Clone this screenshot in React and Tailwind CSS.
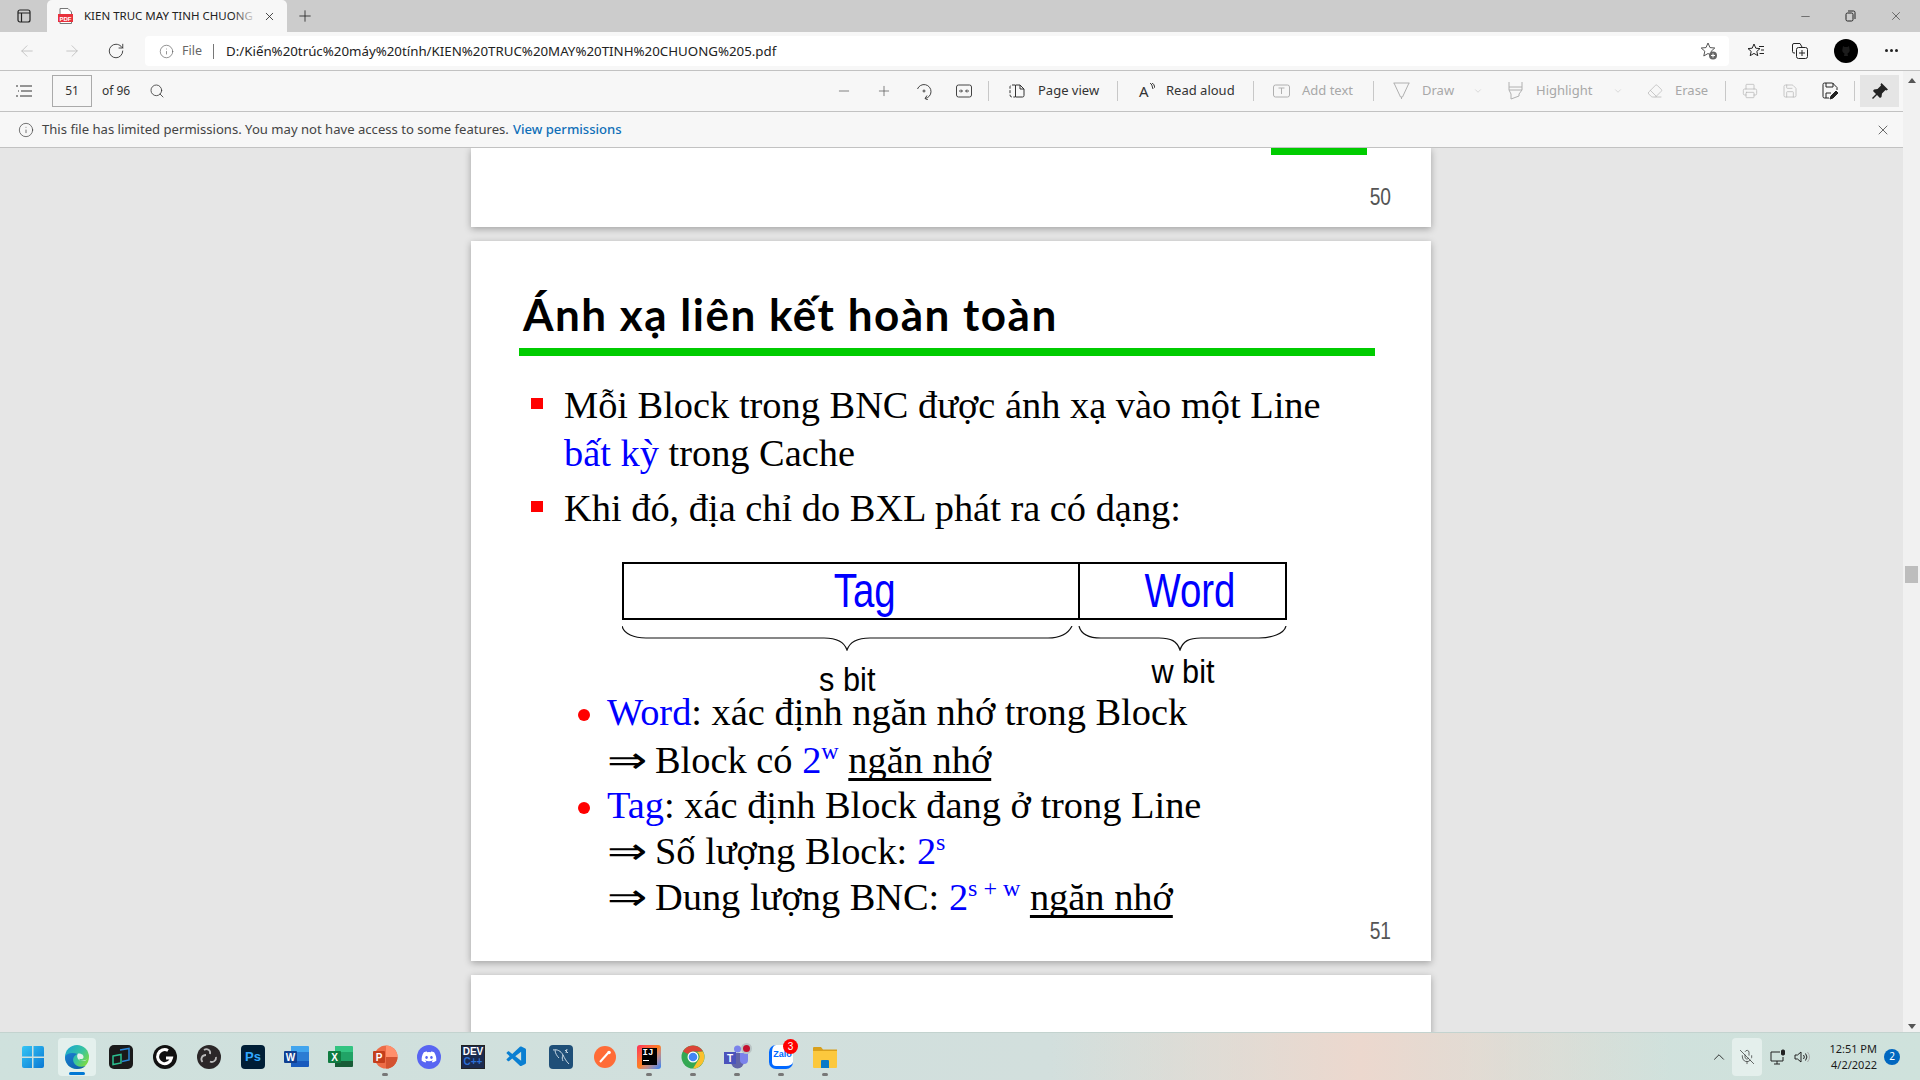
import { ArrowLeft, ArrowRight, ChevronDown, ChevronUp, Eraser, Info, MicOff, Minus, Plus, Printer, RotateCw, Save, Search, X } from 'lucide-react';
import { FaDiscord } from 'react-icons/fa';
import { VscVscode } from 'react-icons/vsc';

const Sep = ({ className }) => <div className={`w-px h-[20px] bg-[#c8c8c8] shrink-0 ${className}`} />;

const TabStrip = () => (
  <div className="h-[32px] bg-[#cccccc] flex items-end shrink-0">
    <svg className="ml-[17px] mb-[9px]" width="14" height="14" viewBox="0 0 14 14" fill="none" stroke="#222" strokeWidth="1.2">
      <rect x="1" y="1" width="12" height="12" rx="2" />
      <path d="M1 4h12M4.5 4v9" />
    </svg>
    <div className="relative ml-[16px] w-[240px] h-[32px] bg-[#f7f7f7] rounded-t-[5px] flex items-center">
      <svg className="ml-[11px]" width="15" height="16" viewBox="0 0 15 16">
        <path d="M2 .5h8l3.5 3.5v11.5H2z" fill="#fff" stroke="#777" />
        <rect x="0" y="6" width="15" height="8" fill="#e8323c" />
        <text x="7.5" y="12.5" fontSize="6" fontWeight="700" fill="#fff" textAnchor="middle" className="font-['Liberation_Sans',sans-serif]">PDF</text>
      </svg>
      <span className="ml-[11px] w-[172px] whitespace-nowrap text-[11.5px] text-[#222]">KIEN TRUC MAY TINH CHUONG</span>
      <div className="absolute left-[186px] top-0 w-[24px] h-[32px] bg-gradient-to-r from-transparent to-[#f7f7f7]" />
      <X className="ml-[7px]" size={13} strokeWidth={1.5} color="#222" />
    </div>
    <Plus className="ml-[9px] mb-[7px]" size={18} strokeWidth={1.1} color="#222" />
    <div className="ml-auto flex items-center h-[32px]">
      <Minus size={13} strokeWidth={1} color="#222" />
      <svg className="ml-[33px]" width="11" height="12" viewBox="0 0 11 12" fill="none" stroke="#222">
        <rect x="1" y="3" width="7" height="8" rx="1.5" />
        <path d="M3 1h5.5a1.5 1.5 0 0 1 1.5 1.5V9" />
      </svg>
      <X className="ml-[33px] mr-[17px]" size={14} strokeWidth={1} color="#222" />
    </div>
  </div>
);

const AddressBar = () => (
  <div className="h-[39px] bg-[#f7f7f7] border-b border-[#c2c2c2] flex items-start pt-[4px] shrink-0">
    <ArrowLeft className="ml-[18px] mt-[6px]" size={18} strokeWidth={1} color="#b5b5b5" />
    <ArrowRight className="ml-[27px] mt-[6px]" size={18} strokeWidth={1} color="#b5b5b5" />
    <RotateCw className="ml-[26px] mt-[6px]" size={18} strokeWidth={1.2} color="#333" />
    <div className="ml-[20px] w-[1584px] h-[30px] bg-white rounded-[4px] flex items-center">
      <Info className="ml-[14px]" size={15} strokeWidth={1} color="#555" />
      <span className="ml-[8px] text-[12.5px] text-[#666]">File</span>
      <div className="ml-[11px] w-px h-[15px] bg-[#777]" />
      <span className="ml-[12px] pt-[1px] text-[13.3px] text-[#222] w-[600px] whitespace-nowrap">D:/Kiến%20trúc%20máy%20tính/KIEN%20TRUC%20MAY%20TINH%20CHUONG%205.pdf</span>
      <svg className="ml-auto mr-[11px]" width="18" height="20" viewBox="0 0 18 20" fill="none">
        <path d="M8 2l2 4.6 4.8.4-3.6 3.2 1 4.8L8 12.5 3.8 15l1-4.8L1.2 7l4.8-.4z" stroke="#555" />
        <circle cx="13" cy="14.5" r="4" fill="#666" />
        <path d="M13 12.5v4M11 14.5h4" stroke="#fff" />
      </svg>
    </div>
    <svg className="ml-[18px] mt-[5px]" width="18" height="20" viewBox="0 0 18 20" fill="none" stroke="#222">
      <path d="M7 3l1.8 4.2 4.2.4-3.2 2.8 1 4.3L7 12.4 3.2 14.7l1-4.3L1 7.6l4.2-.4z" />
      <path d="M12 5.5h5M14 9h3M12.5 12.5H17" />
    </svg>
    <svg className="ml-[26px] mt-[5px]" width="18" height="20" viewBox="0 0 18 20" fill="none" stroke="#222">
      <path d="M4 12H3a1.5 1.5 0 0 1-1.5-1.5V4A1.5 1.5 0 0 1 3 2.5h6L11 6" />
      <rect x="5.5" y="6.5" width="11" height="11" rx="2" />
      <path d="M11 9v6M8 12h6" />
    </svg>
    <div className="ml-[25px] mt-[3px] w-[24px] h-[24px] rounded-full bg-black flex items-center justify-center">
      <svg width="12" height="12" viewBox="0 0 12 12" fill="#1c1c1c"><path d="M3 1l1.5 1h3L9 1l.5 3c.8 2-.5 4-2 4.5L8 11H4l.5-2.5c-1.5-.5-2.8-2.5-2-4.5z" /></svg>
    </div>
    <div className="ml-[27px] mt-[13px] flex gap-[2px]">
      <div className="w-[3px] h-[3px] rounded-full bg-[#222]" />
      <div className="w-[3px] h-[3px] rounded-full bg-[#222]" />
      <div className="w-[3px] h-[3px] rounded-full bg-[#222]" />
    </div>
  </div>
);

const PdfToolbar = () => (
  <div className="h-[41px] bg-[#f7f7f7] border-b border-[#c2c2c2] flex items-center text-[13px] text-[#333] shrink-0">
    <svg className="ml-[16px]" width="16" height="12" viewBox="0 0 16 12" fill="none" stroke="#333">
      <path d="M0 1h2M4 1h12M2 6h1M5 6h11M0 11h2M4 11h12" />
    </svg>
    <div className="ml-[20px] w-[40px] h-[32px] border border-[#aaaaaa] flex items-center justify-center text-[12px]">51</div>
    <span className="ml-[10px] w-[27px] whitespace-nowrap text-[12px]">of 96</span>
    <Search className="ml-[20px]" size={16} strokeWidth={1.2} color="#333" />

    <Minus className="ml-[671px]" size={16} strokeWidth={1.1} color="#555" />
    <Plus className="ml-[24px]" size={16} strokeWidth={1.1} color="#555" />
    <svg className="ml-[24px]" width="16" height="17" viewBox="0 0 16 17" fill="none" stroke="#444">
      <path d="M1.5 6A7 7 0 1 1 9 15.5" />
      <path d="M11 12.5l-2 3 3 1.5" />
      <circle cx="8" cy="8" r="1" />
    </svg>
    <svg className="ml-[24px]" width="16" height="14" viewBox="0 0 16 14" fill="none" stroke="#444">
      <rect x=".5" y="1" width="15" height="12" rx="2" />
      <path d="M3 7h3M10 7h3" />
      <path d="M5 5.5L6.5 7 5 8.5M11 5.5L9.5 7l1.5 1.5" />
    </svg>
    <Sep className="ml-[16px]" />
    <svg className="ml-[20px]" width="16" height="14" viewBox="0 0 16 14" fill="none" stroke="#333">
      <path d="M6 1H3a2 2 0 0 0-2 2v8a2 2 0 0 0 2 2h3" strokeDasharray="3 1.5" />
      <path d="M6.5 1v12h7a1.5 1.5 0 0 0 1.5-1.5V5l-4-4zM11 1v4h4" />
    </svg>
    <span className="ml-[13px] w-[61px] whitespace-nowrap">Page view</span>
    <Sep className="ml-[18px]" />
    <span className="ml-[21px] w-[11px] text-[15px] leading-none">A</span>
    <svg className="mb-[8px]" width="5" height="8" viewBox="0 0 5 8" fill="none" stroke="#333"><path d="M0 0c2 1 2 3 3 6M2 0c2 1 2 2 3 5" /></svg>
    <span className="ml-[11px] w-[69px] whitespace-nowrap">Read aloud</span>
    <Sep className="ml-[18px]" />
    <svg className="ml-[19px]" width="17" height="14" viewBox="0 0 17 14" fill="none" stroke="#b0b0b0">
      <rect x=".5" y="1" width="16" height="12" rx="2" />
      <path d="M5.5 4h6M8.5 4v6" />
    </svg>
    <span className="ml-[12px] w-[52px] whitespace-nowrap text-[#a8a8a8]">Add text</span>
    <Sep className="ml-[19px]" />
    <svg className="ml-[19px]" width="17" height="18" viewBox="0 0 17 18" fill="none" stroke="#b0b0b0">
      <path d="M.5 1h16M1 1l6.5 14h2L16 1M8.5 15v2" />
    </svg>
    <span className="ml-[12px] w-[31px] whitespace-nowrap text-[#a8a8a8]">Draw</span>
    <ChevronDown className="ml-[20px]" size={10} strokeWidth={1} color="#b0b0b0" />
    <svg className="ml-[25px]" width="15" height="18" viewBox="0 0 15 18" fill="none" stroke="#b0b0b0">
      <path d="M1 0v8h13V0M1 5h13M1 8l2 4v5l8-3v-2l3-4" />
    </svg>
    <span className="ml-[13px] w-[57px] whitespace-nowrap text-[#a8a8a8]">Highlight</span>
    <ChevronDown className="ml-[20px]" size={10} strokeWidth={1} color="#b0b0b0" />
    <Eraser className="ml-[24px]" size={16} strokeWidth={1} color="#b0b0b0" />
    <span className="ml-[12px] w-[32px] whitespace-nowrap text-[#a8a8a8]">Erase</span>
    <Sep className="ml-[18px]" />
    <Printer className="ml-[16px]" size={16} strokeWidth={1} color="#b0b0b0" />
    <Save className="ml-[24px]" size={16} strokeWidth={1} color="#b0b0b0" />
    <svg className="ml-[24px]" width="16" height="18" viewBox="0 0 16 18" fill="none" stroke="#222">
      <path d="M7 16H2.5A1.5 1.5 0 0 1 1 14.5v-12A1.5 1.5 0 0 1 2.5 1h8L15 5.5V8" />
      <path d="M4 1v4h7V1M4 16v-5h5" />
      <path d="M8 17l1-3 5-5 2 2-5 5z" fill="#222" />
    </svg>
    <Sep className="ml-[16px]" />
    <div className="ml-[5px] w-[39px] h-[32px] bg-[#e5e5e5] flex items-center justify-center">
      <svg width="16" height="16" viewBox="0 0 16 16" fill="#222">
        <path d="M9.5 0L16 6.5l-1.5 1-1-.5L10 10.5l-.5 3.5-1.5 1-3-3L1 16l-1-1 4-4-3-3 1-1.5L5.5 6 9 2.5l-.5-1z" />
      </svg>
    </div>
  </div>
);

const PermissionBar = () => (
  <div className="h-[36px] bg-[#f7f7f7] border-b border-[#c2c2c2] flex items-center text-[13.1px] text-[#444] shrink-0">
    <Info className="ml-[18px]" size={16} strokeWidth={1} color="#333" />
    <span className="ml-[8px] pt-[1px] whitespace-nowrap">This file has limited permissions. You may not have access to some features.</span>
    <span className="ml-[4px] pt-[1px] whitespace-nowrap font-medium text-[#0f6fb8]">View permissions</span>
    <X className="ml-auto mr-[12px]" size={16} strokeWidth={1} color="#222" />
  </div>
);

const Arrow = () => (
  <span className="inline-block w-[48px] leading-none font-['DejaVu_Sans',sans-serif] text-[37px]">
    <span className="inline-block origin-left scale-x-[1.3]">⇒</span>
  </span>
);

const Sup = ({ children }) => <span className="text-[24px] leading-[0] align-[14px] text-[#0000ff]">{children}</span>;

const Square = ({ className }) => <div className={`w-[12px] h-[11px] bg-[#ff0000] shrink-0 ${className}`} />;

const Dot = () => <div className="mt-[20px] w-[12px] h-[12px] rounded-full bg-[#ff0000] shrink-0" />;

const Slide = () => (
  <div className="h-[720px] bg-white shadow-[0_2px_7px_rgba(0,0,0,0.3)] shrink-0 flex flex-col font-['Liberation_Serif',serif] text-black overflow-hidden">
    <h1 className="ml-[52px] mt-[47px] h-[52px] shrink-0 leading-[52px] text-[44px] tracking-[1.5px] font-bold font-['Lato',sans-serif] whitespace-nowrap">Ánh xạ liên kết hoàn toàn</h1>
    <div className="ml-[48px] mt-[8px] w-[856px] h-[8px] shrink-0 bg-[#00cc00]" />
    <div className="ml-[60px] mt-[25px] flex shrink-0">
      <Square className="mt-[17px]" />
      <p className="ml-[21px] text-[38.4px] leading-[48px]">
        Mỗi Block trong BNC được ánh xạ vào một Line
        <br />
        <span className="text-[#0000ff]">bất kỳ</span> trong Cache
      </p>
    </div>
    <div className="ml-[60px] mt-[7px] flex shrink-0">
      <Square className="mt-[17px]" />
      <p className="ml-[21px] text-[38.4px] leading-[48px]">Khi đó, địa chỉ do BXL phát ra có dạng:</p>
    </div>
    <div className="ml-[151px] mt-[30px] w-[665px] h-[58px] shrink-0 border-2 border-black flex font-['Liberation_Sans',sans-serif] text-[#0000ff] text-[48px] leading-[54px]">
      <div className="w-[456px] border-r-2 border-black flex justify-center pl-[28px]"><span className="inline-block scale-x-[0.8]">Tag</span></div>
      <div className="flex-1 flex justify-center pl-[14px]"><span className="inline-block scale-x-[0.8]">Word</span></div>
    </div>
    <svg className="ml-[151px] mt-[6px] shrink-0" width="665" height="25" viewBox="0 0 665 25" fill="none" stroke="#111" strokeWidth="1.2">
      <path d="M0 0c2 8 12 12 24 12h178c12 0 20 3 23 12 3-9 11-12 23-12h178c12 0 20-4 24-12" />
      <path d="M457 0c2 8 10 12 22 12h58c12 0 18 3 21 12 3-9 9-12 21-12h58c12 0 25-4 27-12" />
    </svg>
    <div className="ml-[151px] h-[38px] w-[665px] shrink-0 flex font-['Liberation_Sans',sans-serif] text-[33px]">
      <div className="w-[450px] flex justify-center mt-[20px]"><span className="inline-block h-[18px] leading-[18px] scale-x-[0.93]">s bit</span></div>
      <div className="flex-1 flex justify-center ml-[7px] mt-[12px]"><span className="inline-block h-[18px] leading-[18px] scale-x-[0.93]">w bit</span></div>
    </div>
    <div className="ml-[107px] flex flex-col shrink-0 text-[38.4px] leading-[46px]">
      <div className="flex h-[48px]">
        <Dot />
        <p className="ml-[17px]"><span className="text-[#0000ff]">Word</span>: xác định ngăn nhớ trong Block</p>
      </div>
      <p className="ml-[29px] h-[45px]">
        <Arrow />Block có <span className="text-[#0000ff]">2</span><Sup>w</Sup>{' '}
        <span className="underline decoration-[3px] underline-offset-[5px] [text-decoration-skip-ink:none]">ngăn nhớ</span>
      </p>
      <div className="flex h-[46px]">
        <Dot />
        <p className="ml-[17px]"><span className="text-[#0000ff]">Tag</span>: xác định Block đang ở trong Line</p>
      </div>
      <p className="ml-[29px] h-[46px]"><Arrow />Số lượng Block: <span className="text-[#0000ff]">2</span><Sup>s</Sup></p>
      <p className="ml-[29px] h-[46px]">
        <Arrow />Dung lượng BNC: <span className="text-[#0000ff]">2</span><Sup>s + w</Sup>{' '}
        <span className="underline decoration-[3px] underline-offset-[5px] [text-decoration-skip-ink:none]">ngăn nhớ</span>
      </p>
    </div>
    <div className="ml-[897px] -mt-[2px] w-[24px] h-[26px] shrink-0 leading-[26px] text-[24px] text-[#555] font-['Liberation_Sans',sans-serif] flex justify-center"><span className="inline-block scale-x-[0.8]">51</span></div>
  </div>
);

const PdfPages = () => (
  <div className="flex-1 bg-[#e6e6e6] overflow-hidden flex flex-col pl-[471px] pr-[472px] gap-[14px]">
    <div className="h-[79px] bg-white shadow-[0_2px_7px_rgba(0,0,0,0.3)] shrink-0 flex flex-col">
      <div className="ml-[800px] w-[96px] h-[7px] bg-[#00cc00]" />
      <div className="ml-[897px] mt-[29px] w-[24px] h-[26px] leading-[26px] text-[24px] text-[#555] font-['Liberation_Sans',sans-serif] flex justify-center"><span className="inline-block scale-x-[0.8]">50</span></div>
    </div>
    <Slide />
    <div className="h-[60px] bg-white shadow-[0_2px_7px_rgba(0,0,0,0.3)] shrink-0" />
  </div>
);

const Scrollbar = () => (
  <div className="w-[17px] bg-[#f1f1f1] flex flex-col items-center shrink-0">
    <div className="mt-[7px] w-0 h-0 border-x-[4px] border-x-transparent border-b-[5px] border-b-[#555]" />
    <div className="mt-[483px] w-[13px] h-[17px] bg-[#bdbdbd]" />
    <div className="mt-auto mb-[3px] w-0 h-0 border-x-[4px] border-x-transparent border-t-[5px] border-t-[#555]" />
  </div>
);

const WindowsLogo = () => (
  <svg width="24" height="24" viewBox="0 0 24 24">
    <defs><linearGradient id="win" x1="0" y1="0" x2="1" y2="1"><stop offset="0" stopColor="#35c6f5" /><stop offset="1" stopColor="#0a78d4" /></linearGradient></defs>
    <path d="M1 3a2 2 0 0 1 2-2h8v10.5H1zM12.5 1H21a2 2 0 0 1 2 2v8.5H12.5zM1 13h10v10H3a2 2 0 0 1-2-2zM12.5 13H23v8a2 2 0 0 1-2 2h-8.5z" fill="url(#win)" />
  </svg>
);

const EdgeLogo = () => (
  <svg width="26" height="26" viewBox="0 0 26 26">
    <defs>
      <linearGradient id="edge" x1="0" y1="0" x2="1" y2=".7"><stop offset="0" stopColor="#17a3d6" /><stop offset=".6" stopColor="#37c4a0" /><stop offset="1" stopColor="#7fdc3e" /></linearGradient>
      <linearGradient id="edgeB" x1="0" y1="0" x2="1" y2="1"><stop offset="0" stopColor="#1a7fd0" /><stop offset="1" stopColor="#0d5aa8" /></linearGradient>
    </defs>
    <circle cx="13" cy="13" r="12" fill="url(#edge)" />
    <path d="M1 13c0 7 5.5 12 12 12 3.5 0 6.5-1.2 8.5-3-5 1.8-10.5.2-12-4-1.3-3.8 1-7 4-8-5-2-11-1-12.5 3z" fill="url(#edgeB)" />
    <path d="M14 9.5c3.5-.2 6 1.5 5.500 4-.3 1.500-2.500 2-4.500 1.200 1 2.500 5.500 3.800 9-.2-1.500 2-6.500 3-9 1.500-2-1.500-2.500-5-1-6.500z" fill="#e4f0ed" />
  </svg>
);

const AppIcon = ({ className, children }) => (
  <div className={`w-[24px] h-[24px] flex items-center justify-center overflow-hidden font-['Liberation_Sans',sans-serif] ${className}`}>{children}</div>
);

const StackIcon = ({ top, mid, low, badge, letter }) => (
  <svg width="26" height="24" viewBox="0 0 26 24">
    <path d="M7 1h17a1 1 0 0 1 1 1v5H7z" fill={top} />
    <path d="M7 7h18v9H7z" fill={mid} />
    <path d="M7 16h18v5a1 1 0 0 1-1 1H7z" fill={low} />
    <rect x="0" y="6" width="13" height="12" rx="1" fill={badge} />
    <text x="6.5" y="15.5" fontSize="10" fontWeight="700" fill="#fff" textAnchor="middle" className="font-['Liberation_Sans',sans-serif]">{letter}</text>
  </svg>
);

const taskbarIcons = [
  { id: 'start', icon: <WindowsLogo /> },
  { id: 'edge', icon: <EdgeLogo />, active: true },
  {
    id: 'app',
    icon: (
      <svg width="24" height="24" viewBox="0 0 24 24" fill="none">
        <rect width="24" height="24" rx="5" fill="#1a1a1a" />
        <path d="M11 5l9-1.5V15l-7 1.5" stroke="#2a86d8" strokeWidth="1.5" />
        <path d="M4 11l8-1.5V18l-8 1.5z" stroke="#2bbf8e" strokeWidth="1.5" />
      </svg>
    ),
  },
  {
    id: 'logitech',
    icon: (
      <svg width="24" height="24" viewBox="0 0 24 24" fill="none">
        <circle cx="12" cy="12" r="12" fill="#111" />
        <path d="M15 5.5a7 7 0 1 0 3.5 7.5H13" stroke="#fff" strokeWidth="3" />
      </svg>
    ),
  },
  {
    id: 'obs',
    icon: (
      <svg width="24" height="24" viewBox="0 0 24 24" fill="none" stroke="#bbb" strokeWidth="1.8">
        <circle cx="12" cy="12" r="12" fill="#2b2728" stroke="none" />
        <path d="M7 5c3-2 7 0 6 4M19 12c.5 3.5-3 6-6 4.5M5.5 17c-2.5-3-.5-7 3.5-7" />
      </svg>
    ),
  },
  {
    id: 'ps',
    icon: <AppIcon className="bg-[#001e36] rounded-[4px] text-[#31a8ff] text-[13px] font-bold">Ps</AppIcon>,
  },
  { id: 'word', icon: <StackIcon top="#41a5ee" mid="#2b7cd3" low="#185abd" badge="#103f91" letter="W" /> },
  { id: 'excel', icon: <StackIcon top="#33c481" mid="#21a366" low="#185c37" badge="#107c41" letter="X" /> },
  {
    id: 'ppt',
    running: true,
    icon: (
      <svg width="26" height="24" viewBox="0 0 26 24">
        <circle cx="14" cy="12" r="11.5" fill="#ed6c47" />
        <path d="M14 .5A11.5 11.5 0 0 1 25.5 12H14z" fill="#ff8f6b" />
        <path d="M14 12h11.5A11.5 11.5 0 0 1 14 23.5z" fill="#d35230" />
        <rect x="1" y="6" width="12" height="12" rx="1" fill="#c43e1c" />
        <text x="7" y="15.5" fontSize="10" fontWeight="700" fill="#fff" textAnchor="middle" className="font-['Liberation_Sans',sans-serif]">P</text>
      </svg>
    ),
  },
  {
    id: 'discord',
    icon: <AppIcon className="bg-[#5865f2] rounded-full"><FaDiscord size={16} color="#fff" /></AppIcon>,
  },
  {
    id: 'dev',
    icon: (
      <AppIcon className="bg-[#1b2a4e] flex-col border border-[#222] text-[10px] leading-[10px] font-bold">
        <span className="text-white">DEV</span>
        <span className="text-[#2b6fd6]">C++</span>
      </AppIcon>
    ),
  },
  { id: 'code', icon: <VscVscode size={24} color="#0a7fd2" /> },
  {
    id: 'mysql',
    icon: (
      <svg width="24" height="24" viewBox="0 0 24 24" fill="none" stroke="#c8d8e4" strokeWidth="1">
        <rect width="24" height="24" rx="4" fill="#1f4f78" stroke="none" />
        <path d="M4 5c4-1 8 1 10 5s3 6 6 9M6 5c0 3 2 6 4 8M14 10c-1 2-1 4 0 6" />
        <path d="M16 5l3 3M18 4l-1 4" />
      </svg>
    ),
  },
  {
    id: 'postman',
    icon: (
      <svg width="24" height="24" viewBox="0 0 24 24" fill="none">
        <circle cx="12" cy="12" r="11" fill="#ff6c37" />
        <path d="M7 17l8-9" stroke="#fff" strokeWidth="2" />
        <circle cx="16" cy="7.5" r="1.8" fill="#fff" />
      </svg>
    ),
  },
  {
    id: 'idea',
    running: true,
    icon: (
      <div className="w-[24px] h-[24px] bg-gradient-to-br from-[#fe2857] via-[#fc801d] to-[#087cfa] rounded-[3px] flex items-center justify-center font-['Liberation_Mono',monospace]">
        <div className="w-[15px] h-[17px] bg-black flex flex-col pl-[1px] text-white text-[9px] leading-[10px] font-bold">
          IJ
          <div className="mt-[2px] w-[6px] h-[1px] bg-white" />
        </div>
      </div>
    ),
  },
  {
    id: 'chrome',
    running: true,
    icon: (
      <svg width="24" height="24" viewBox="0 0 24 24">
        <circle cx="12" cy="12" r="11.5" fill="#34a853" />
        <path d="M12 .5A11.5 11.5 0 0 1 22 6.5H12A5.5 5.5 0 0 0 7 9L2 6.5A11.5 11.5 0 0 1 12 .5z" fill="#db4437" />
        <path d="M22 6.5A11.5 11.5 0 0 1 12 23.5l5-8a5.5 5.5 0 0 0-1-8.5z" fill="#fbc02d" />
        <circle cx="12" cy="12" r="5.5" fill="#fff" />
        <circle cx="12" cy="12" r="4.3" fill="#4285f4" />
      </svg>
    ),
  },
  {
    id: 'teams',
    running: true,
    icon: (
      <div className="relative w-[26px] h-[24px]">
        <svg width="26" height="24" viewBox="0 0 26 24">
          <circle cx="13.5" cy="4" r="3.5" fill="#7b83eb" />
          <path d="M7 8h13v9a6.5 6.5 0 0 1-13 0z" fill="#6264a7" />
          <path d="M16 8h8v7a4 4 0 0 1-8 0z" fill="#7b83eb" />
          <rect x="0" y="7" width="12" height="12" fill="#4b53bc" />
          <text x="6" y="16.5" fontSize="10" fontWeight="700" fill="#fff" textAnchor="middle" className="font-['Liberation_Sans',sans-serif]">T</text>
        </svg>
        <div className="absolute right-[-2px] top-[-2px] w-[11px] h-[11px] rounded-full bg-[#c4122f] border-2 border-[#b9c4c4]" />
      </div>
    ),
  },
  {
    id: 'zalo',
    running: true,
    icon: (
      <div className="relative w-[24px] h-[24px] bg-white border-l-[3px] border-b-[3px] border-[#0068ff] rounded-[7px] flex items-center justify-center text-[#0068ff] text-[9px] font-bold font-['Liberation_Sans',sans-serif]">
        Zalo
        <div className="absolute right-[-5px] top-[-6px] w-[15px] h-[15px] rounded-full bg-[#ff0000] text-white text-[10px] font-normal flex items-center justify-center">3</div>
      </div>
    ),
  },
  {
    id: 'files',
    running: true,
    icon: (
      <svg width="24" height="22" viewBox="0 0 24 22">
        <path d="M0 2a1 1 0 0 1 1-1h7l2 2.5h14V7H0z" fill="#d9a01c" />
        <path d="M0 5h24v16a1 1 0 0 1-1 1H1a1 1 0 0 1-1-1z" fill="#fcc83d" />
        <path d="M8 15a1 1 0 0 1 1-1h6a1 1 0 0 1 1 1v7H8z" fill="#0a78c8" />
      </svg>
    ),
  },
];

const Taskbar = () => (
  <div className="h-[48px] shrink-0 border-t border-[#c3d3cf] bg-gradient-to-r from-[#cfe1dd] via-[#d2dfdd] via-55% to-[#cfe2dc] relative flex items-center">
    <div className="absolute inset-y-0 left-[1050px] w-[620px] bg-gradient-to-r from-transparent via-[#ecd8ce] to-transparent" />
    <div className="relative ml-[11px] flex">
      {taskbarIcons.map((item) => (
        <div key={item.id} className="relative w-[44px] h-[38px] flex items-center justify-center">
          {item.active && <div className="absolute left-[3px] top-0 w-[38px] h-[38px] rounded-[4px] bg-[#e4f0ed]" />}
          <div className="relative">{item.icon}</div>
          {item.active && <div className="absolute left-[14px] bottom-[1px] w-[16px] h-[3px] rounded-full bg-[#0078d4]" />}
          {item.running && <div className="absolute left-[19px] bottom-[0px] w-[6px] h-[3px] rounded-full bg-[#777]" />}
        </div>
      ))}
    </div>
    <div className="relative ml-auto flex items-center font-['Noto_Sans',sans-serif] text-[#1a1a1a]">
      <ChevronUp size={18} strokeWidth={1.2} color="#222" />
      <div className="ml-[4px] w-[30px] h-[38px] rounded-[4px] bg-[#e4efec] flex items-center justify-center">
        <MicOff size={16} strokeWidth={1} color="#222" />
      </div>
      <svg className="ml-[8px]" width="16" height="16" viewBox="0 0 16 16" fill="none" stroke="#222">
        <path d="M10 3H1v9h12V8M7 12v3M4 15h6" />
        <rect x="11.5" y="1" width="3" height="5" rx="1" fill="#222" />
      </svg>
      <svg className="ml-[8px]" width="16" height="16" viewBox="0 0 16 16" fill="none" stroke="#222">
        <path d="M1 6v4h2.5L7 13V3L3.5 6z" />
        <path d="M9.5 6a3 3 0 0 1 0 4M11.5 4.5a5.5 5.5 0 0 1 0 7" />
        <path d="M13.5 3a8 8 0 0 1 0 10" stroke="#aaa" />
      </svg>
      <div className="ml-[13px] w-[54px] flex flex-col items-end text-[11px] leading-[16px] whitespace-nowrap">
        <span>12:51 PM</span>
        <span>4/2/2022</span>
      </div>
      <div className="ml-[7px] mr-[20px] w-[16px] h-[16px] rounded-full bg-[#0067c0] text-white text-[10px] flex items-center justify-center">2</div>
    </div>
  </div>
);

export default function App() {
  return (
    <div className="w-[1920px] h-[1080px] overflow-hidden flex flex-col font-['Noto_Sans',sans-serif]">
      <TabStrip />
      <AddressBar />
      <div className="flex-1 flex min-h-0">
        <div className="flex-1 flex flex-col min-w-0">
          <PdfToolbar />
          <PermissionBar />
          <PdfPages />
        </div>
        <Scrollbar />
      </div>
      <Taskbar />
    </div>
  );
}
